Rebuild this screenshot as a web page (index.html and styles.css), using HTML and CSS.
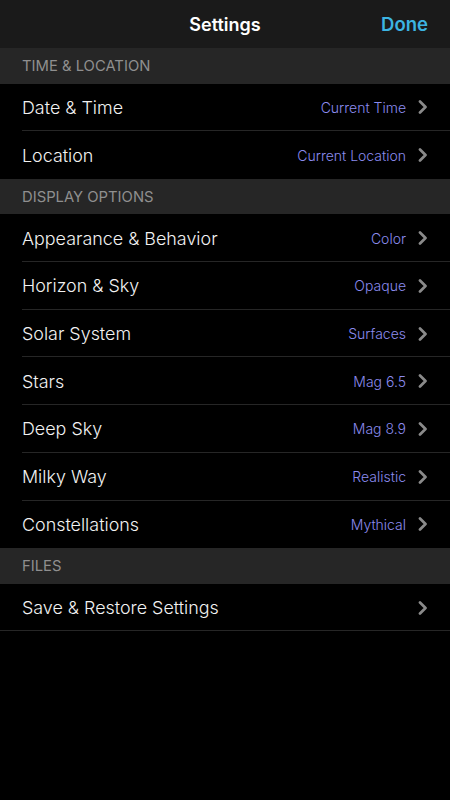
FILE: index.html
```html
<!DOCTYPE html>
<html>
<head>
<meta charset="utf-8">
<link rel="stylesheet" href="styles.css">
</head>
<body>
<div class="nav">
  <span class="title">Settings</span>
  <span class="done">Done</span>
</div>
<div class="section">TIME &amp; LOCATION</div>
<div class="row"><span class="label">Date &amp; Time</span><span class="value">Current Time</span><svg class="chev" viewBox="0 0 10 14"><path d="M2 1.5 L7.5 7 L2 12.5"/></svg></div>
<div class="row last"><span class="label">Location</span><span class="value">Current Location</span><svg class="chev" viewBox="0 0 10 14"><path d="M2 1.5 L7.5 7 L2 12.5"/></svg></div>
<div class="section">DISPLAY OPTIONS</div>
<div class="row"><span class="label">Appearance &amp; Behavior</span><span class="value">Color</span><svg class="chev" viewBox="0 0 10 14"><path d="M2 1.5 L7.5 7 L2 12.5"/></svg></div>
<div class="row"><span class="label">Horizon &amp; Sky</span><span class="value">Opaque</span><svg class="chev" viewBox="0 0 10 14"><path d="M2 1.5 L7.5 7 L2 12.5"/></svg></div>
<div class="row"><span class="label">Solar System</span><span class="value">Surfaces</span><svg class="chev" viewBox="0 0 10 14"><path d="M2 1.5 L7.5 7 L2 12.5"/></svg></div>
<div class="row"><span class="label">Stars</span><span class="value">Mag 6.5</span><svg class="chev" viewBox="0 0 10 14"><path d="M2 1.5 L7.5 7 L2 12.5"/></svg></div>
<div class="row"><span class="label">Deep Sky</span><span class="value">Mag 8.9</span><svg class="chev" viewBox="0 0 10 14"><path d="M2 1.5 L7.5 7 L2 12.5"/></svg></div>
<div class="row"><span class="label">Milky Way</span><span class="value">Realistic</span><svg class="chev" viewBox="0 0 10 14"><path d="M2 1.5 L7.5 7 L2 12.5"/></svg></div>
<div class="row last"><span class="label">Constellations</span><span class="value">Mythical</span><svg class="chev" viewBox="0 0 10 14"><path d="M2 1.5 L7.5 7 L2 12.5"/></svg></div>
<div class="section">FILES</div>
<div class="row end"><span class="label">Save &amp; Restore Settings</span><span class="value"></span><svg class="chev" viewBox="0 0 10 14"><path d="M2 1.5 L7.5 7 L2 12.5"/></svg></div>
</body>
</html>
```
FILE: styles.css
```css
html, body {
  margin: 0;
  padding: 0;
  background: #000;
  height: 100%;
}
body {
  font-family: Inter, "Liberation Sans", sans-serif;
  color: #f2f2f2;
  width: 450px;
}
.nav {
  height: 48px;
  background: #1a1a1a;
  display: flex;
  align-items: center;
  justify-content: center;
  position: relative;
}
.title {
  font-size: 18px;
  font-weight: 600;
  color: #fff;
}
.done {
  position: absolute;
  right: 22px;
  top: 0;
  line-height: 48px;
  font-size: 18.5px;
  font-weight: 600;
  color: #3cb4e2;
}
.section {
  height: 35.5px;
  background: #262626;
  color: #8f8f8f;
  font-size: 14.8px;
  padding-left: 22px;
  display: flex;
  align-items: center;
  box-sizing: border-box;
}
.row {
  height: 47.7px;
  display: flex;
  align-items: center;
  padding-left: 22px;
  padding-right: 22px;
  box-sizing: border-box;
  position: relative;
}
.row::after {
  content: "";
  position: absolute;
  left: 22px;
  right: 0;
  bottom: 0;
  height: 1px;
  background: #262626;
}
.row.last::after { display: none; }
.row.end::after { left: 0; }
.label {
  flex: 1;
  font-size: 17.9px;
  font-weight: 350;
}
.value {
  font-size: 14px;
  font-weight: 350;
  color: #8b8bee;
  margin-right: 12px;
}
.chev {
  width: 10px;
  height: 14px;
  fill: none;
  stroke: #8a8a8a;
  stroke-width: 2.7;
  stroke-linecap: round;
  stroke-linejoin: round;
}
```
